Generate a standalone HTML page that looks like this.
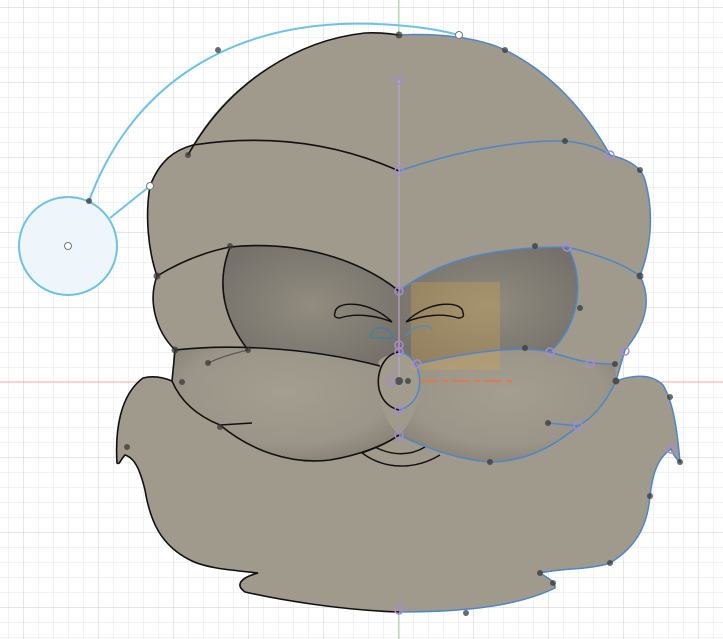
<!DOCTYPE html>
<html><head><meta charset="utf-8"><style>
html,body{margin:0;padding:0;background:#fff;width:723px;height:639px;overflow:hidden}
svg{display:block}
</style></head><body>
<svg width="723" height="639" viewBox="0 0 723 639" xmlns="http://www.w3.org/2000/svg">
<defs>
<pattern id="minor" x="8" y="7" width="15" height="15" patternUnits="userSpaceOnUse">
<path d="M0 0V15M0 0H15" stroke="#e4e4e4" stroke-width="1" fill="none"/>
</pattern>
<pattern id="major" x="23" y="7" width="75" height="75" patternUnits="userSpaceOnUse">
<path d="M0 0V75M0 0H75" stroke="#cdcdcd" stroke-width="1" fill="none"/>
</pattern>
<radialGradient id="sock" cx="0.5" cy="0.5" r="0.6">
<stop offset="0" stop-color="#918c7f"/><stop offset="1" stop-color="#75716a"/>
</radialGradient>
<radialGradient id="must" cx="0.5" cy="0.4" r="0.65">
<stop offset="0" stop-color="#a39e90"/><stop offset="0.7" stop-color="#9a9588"/><stop offset="1" stop-color="#858174"/>
</radialGradient>
</defs>
<rect width="723" height="639" fill="#fff"/>
<rect width="723" height="639" fill="url(#minor)"/>
<rect width="723" height="639" fill="url(#major)"/>
<line x1="0" y1="382" x2="723" y2="382" stroke="#f2a6a6" stroke-width="1"/>
<line x1="399" y1="0" x2="399" y2="639" stroke="#9ee39e" stroke-width="1"/>

<circle cx="68" cy="246" r="49" fill="#eef6fc" stroke="#6cc3e6" stroke-width="2"/>
<circle cx="68" cy="246" r="3.5" fill="#fff" stroke="#777" stroke-width="1"/>
<path d="M89 201 C130 90 220 30 340 24 C400 22 440 30 459 35" fill="none" stroke="#6cc3e6" stroke-width="2"/>
<line x1="110" y1="218" x2="150" y2="186" stroke="#6cc3e6" stroke-width="2"/>

<path d="M399 35 C440 33 480 38 505 50 C550 72 585 110 610 155 C630 160 642 168 645 180 C655 215 650 250 640 276 C650 295 650 320 625 350 L616 381 C630 376 650 372 663 385 C675 405 678 440 680 462 C675 458 672 452 671 449 C655 460 652 480 650 496 C648 520 640 545 610 563 C590 570 560 568 540 573 C548 578 556 582 555 588 C520 605 470 612 399 612 C340 610 280 600 245 592 C235 585 240 578 258 573 C230 570 205 568 190 560 C160 545 150 520 145 490 C140 470 135 458 125 455 C120 460 120 465 117 463 C115 430 120 395 143 378 C155 375 165 378 172 381 L175 350 C155 330 148 300 157 276 C148 250 145 215 150 186 C160 160 175 150 193 145 C230 80 300 40 365 33 C380 32 392 34 399 35 Z" fill="#9f9a8c"/>

<!-- sockets -->
<path d="M230 247 C300 240 360 260 399 291 L399 352 C380 357 375 362 380 366 C320 352 280 350 248 350 C225 320 215 285 230 247 Z" fill="url(#sock)"/>
<path d="M399 291 C440 260 490 247 567 247 C582 270 585 320 550 352 C520 345 470 352 417 364 C412 358 405 354 399 352 Z" fill="url(#sock)"/>
<!-- mustache -->
<path d="M175 350 C220 345 300 345 380 366 C375 390 382 420 399 435 C385 445 360 455 330 460 C290 465 250 450 220 425 L252 423 L220 425 C195 415 180 400 172 381 Z" fill="url(#must)"/>
<path d="M417 364 C470 352 520 345 550 352 C570 358 585 364 615 364 L616 381 C605 405 590 420 578 426 L548 423 L578 426 C550 450 520 462 490 462 C460 460 430 450 399 435 C415 420 425 390 417 364 Z" fill="url(#must)"/>
<!-- nose -->
<path d="M399 352 C375 355 368 402 399 410 C430 402 423 355 399 352 Z" fill="#a19c8e"/>

<rect x="411" y="282" width="89" height="88" fill="#d9a548" fill-opacity="0.3"/>

<g fill="none" stroke="#111" stroke-width="1.6">
<path d="M399 35 C392 34 380 32 365 33 C300 40 230 80 188 155"/>
<path d="M150 186 C160 160 175 150 193 145 C260 135 330 140 399 171"/>
<path d="M150 186 C145 215 148 250 157 276 C148 300 155 330 175 350 L172 381"/>
<path d="M157 276 C180 262 205 252 230 247 C300 240 360 260 399 291"/>
<path d="M230 247 C215 285 225 320 248 350"/>
<path d="M175 350 C220 345 300 345 380 366"/>
<path d="M172 381 C180 400 195 415 220 425 L252 423 L220 425 C250 450 290 465 330 460 C360 455 385 445 399 435"/>
<path d="M172 381 C165 378 155 375 143 378 C120 395 115 430 117 463 C120 465 120 460 125 455 C135 458 140 470 145 490 C150 520 160 545 190 560 C205 568 230 570 258 573 C240 578 235 585 245 592 C280 600 340 610 399 612"/>
<path d="M335 313 C335 300 370 300 392 322 C375 315 355 313 340 318 C334 318 334 315 335 313 Z" stroke-width="1.4"/>
<path d="M463 313 C463 300 428 300 406 322 C423 315 443 313 458 318 C464 318 464 315 463 313 Z" stroke-width="1.4"/>
<path d="M362 453 C385 470 415 470 440 455" stroke-width="1.4"/>
<path d="M375 447 C392 456 410 456 425 447" stroke-width="1.4"/>
<path d="M399 435 C385 445 370 450 362 453" stroke-width="1.4"/>
<path d="M399 352 C375 355 368 402 399 410"/>
<path d="M208 363 C225 355 240 352 248 350" stroke="#555" stroke-width="1.2"/>
</g>
<g fill="none" stroke="#4f86c8" stroke-width="1.5">
<path d="M399 35 C440 33 480 38 505 50 C550 72 585 110 610 155 C630 160 642 168 645 180 C655 215 650 250 640 276 C650 295 650 320 625 350 L616 381 C630 376 650 372 663 385 C675 405 678 440 680 462 C675 458 672 452 671 449 C655 460 652 480 650 496 C648 520 640 545 610 563 C590 570 560 568 540 573 C548 578 556 582 555 588 C520 605 470 612 399 612"/>
<path d="M399 171 C460 150 520 140 565 141 C585 143 600 148 610 155"/>
<path d="M399 291 C440 260 490 247 567 247 C600 255 625 265 640 276"/>
<path d="M567 247 C582 270 585 320 550 352"/>
<path d="M417 364 C470 352 520 345 550 352 C570 358 585 364 615 364"/>
<path d="M616 381 C605 405 590 420 578 426 L548 423"/>
<path d="M578 426 C550 450 520 462 490 462 C460 460 430 450 399 435"/>
<path d="M399 352 C423 355 430 402 399 410"/>
<path d="M372 333 C378 322 392 330 394 338 C388 340 378 336 374 338 C370 338 370 335 372 333 Z" stroke="#3f7fa8" stroke-width="1.3"/>
<path d="M406 336 C412 326 428 322 432 330" stroke="#4a90b8" stroke-width="1.3"/>
</g>
<line x1="399" y1="80" x2="399" y2="380" stroke="#b8a6cf" stroke-width="1.2"/>
<line x1="420" y1="381" x2="515" y2="381" stroke="#e07a4a" stroke-width="2" stroke-dasharray="18,4,6,4"/>

<g fill="#3a3a3a" fill-opacity="0.75">
<circle cx="218" cy="50" r="3"/><circle cx="399" cy="35" r="3.5"/><circle cx="505" cy="50" r="3"/>
<circle cx="89" cy="201" r="3"/><circle cx="188" cy="155" r="3"/><circle cx="565" cy="141" r="3"/>
<circle cx="640" cy="170" r="3"/><circle cx="157" cy="276" r="3.5"/><circle cx="640" cy="276" r="3.5"/>
<circle cx="230" cy="246" r="3"/><circle cx="535" cy="246" r="3"/><circle cx="580" cy="308" r="3"/>
<circle cx="175" cy="350" r="3.5"/><circle cx="208" cy="363" r="3"/><circle cx="248" cy="350" r="3"/>
<circle cx="525" cy="348" r="3"/><circle cx="615" cy="364" r="3"/><circle cx="182" cy="382" r="3"/>
<circle cx="616" cy="381" r="3.5"/><circle cx="670" cy="397" r="3"/><circle cx="127" cy="447" r="3"/>
<circle cx="220" cy="427" r="3"/><circle cx="548" cy="423" r="3"/><circle cx="490" cy="462" r="3"/>
<circle cx="680" cy="462" r="3"/><circle cx="650" cy="496" r="3"/><circle cx="610" cy="563" r="3"/>
<circle cx="540" cy="573" r="3"/><circle cx="553" cy="583" r="3"/><circle cx="466" cy="613" r="3"/>
<circle cx="399" cy="381" r="4"/><circle cx="408" cy="381" r="3"/>
</g>
<g fill="none" stroke="#a98ad0" stroke-width="1.5">
<circle cx="399" cy="80" r="4"/><circle cx="399" cy="171" r="4"/><circle cx="610" cy="155" r="4"/>
<circle cx="567" cy="247" r="4"/><circle cx="399" cy="291" r="4"/><circle cx="399" cy="345" r="4"/>
<circle cx="399" cy="352" r="4"/><circle cx="417" cy="364" r="4"/><circle cx="550" cy="352" r="4"/>
<circle cx="590" cy="364" r="4"/><circle cx="625" cy="351" r="4"/><circle cx="391" cy="381" r="4"/>
<circle cx="399" cy="410" r="4"/><circle cx="399" cy="435" r="4"/><circle cx="578" cy="426" r="4"/>
<circle cx="671" cy="449" r="4"/><circle cx="399" cy="610" r="4"/>
</g>
<circle cx="459" cy="35" r="3.5" fill="#fff" stroke="#777"/>
<circle cx="150" cy="186" r="3.5" fill="#fff" stroke="#777"/>
</svg>
</body></html>
